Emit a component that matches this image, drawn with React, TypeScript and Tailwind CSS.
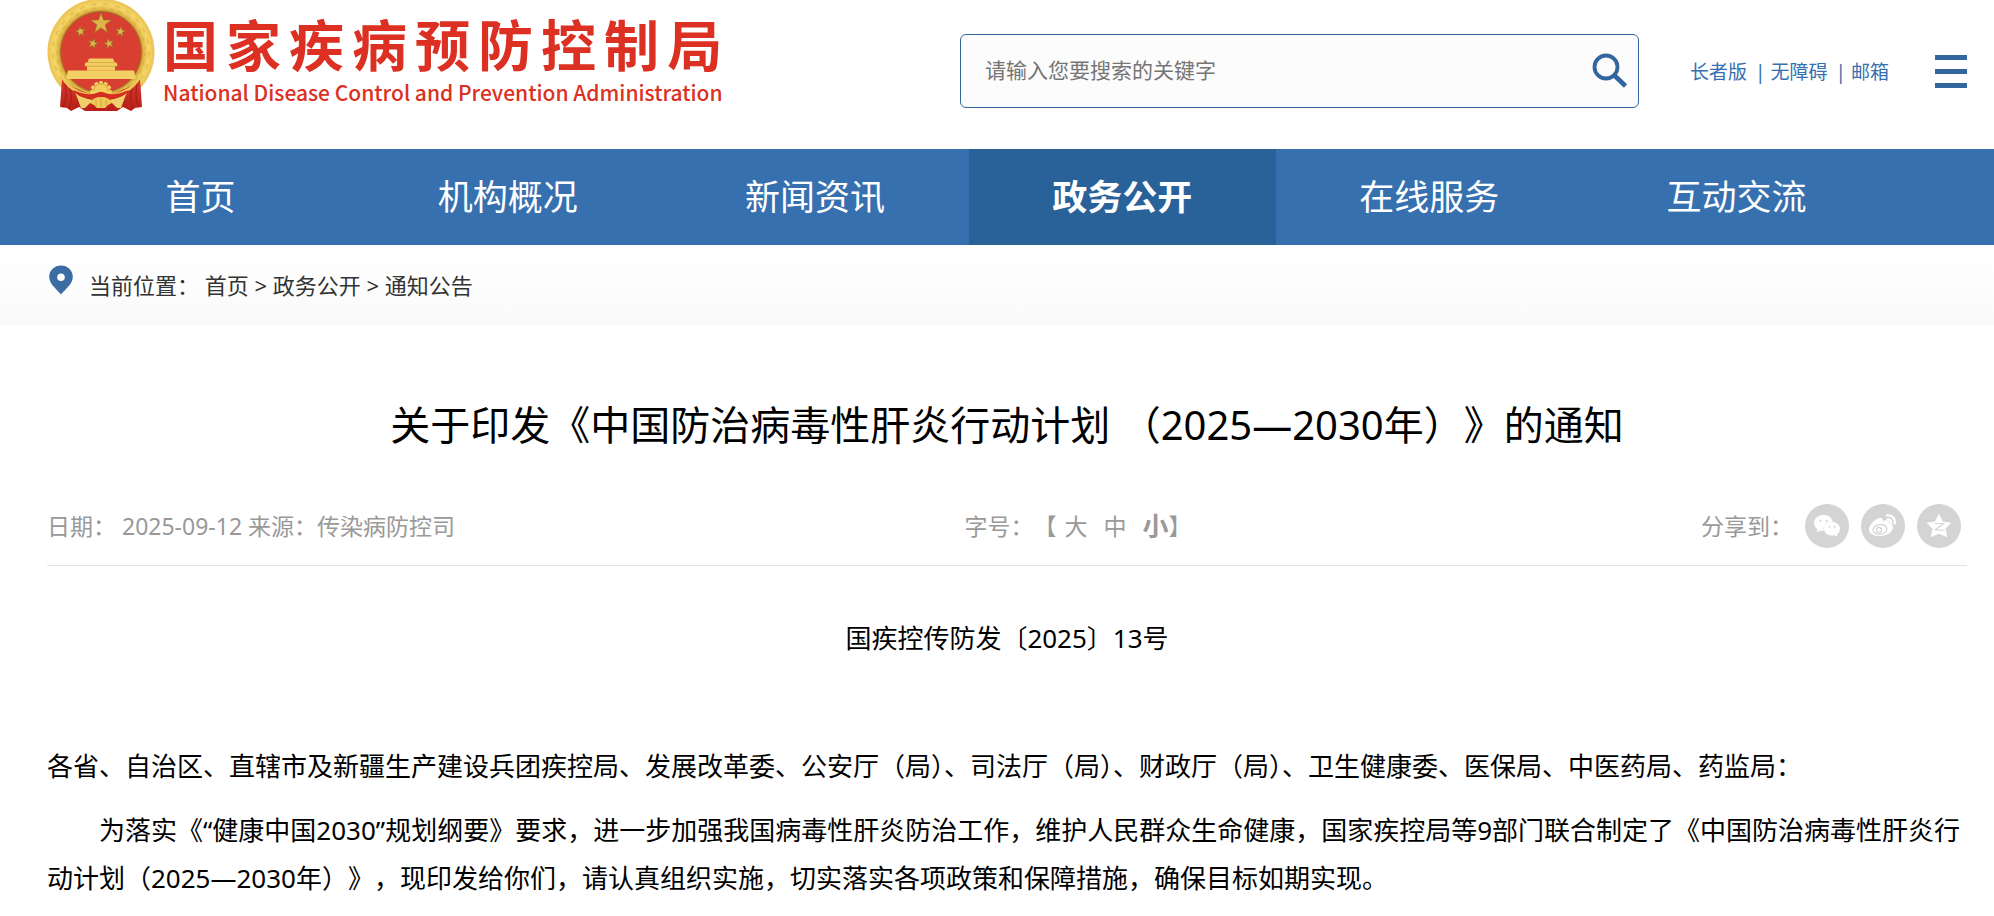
import React from "react";

const navItems = ["首页", "机构概况", "新闻资讯", "政务公开", "在线服务", "互动交流"];
const activeItem = "政务公开";
const siteName = "国家疾病预防控制局";

function starPoints(cx: number, cy: number, r: number, rot = 0) {
  const pts: string[] = [];
  for (let i = 0; i < 10; i++) {
    const rad = i % 2 === 0 ? r : r * 0.4;
    const a = ((i * 36 - 90 + rot) * Math.PI) / 180;
    pts.push(`${(cx + rad * Math.cos(a)).toFixed(2)},${(cy + rad * Math.sin(a)).toFixed(2)}`);
  }
  return pts.join(" ");
}

function Emblem() {
  const teeth = Array.from({ length: 12 }, (_, i) => i * 30);
  return (
    <svg viewBox="0 0 108 112" className="h-28 w-[108px] shrink-0" aria-hidden="true">
      <defs>
        <radialGradient id="gold" cx="54" cy="52" r="54" gradientUnits="userSpaceOnUse">
          <stop offset="0.74" stopColor="#b98a2c" />
          <stop offset="0.8" stopColor="#e6bd4c" />
          <stop offset="0.88" stopColor="#f5d768" />
          <stop offset="1" stopColor="#e8c050" />
        </radialGradient>
        <linearGradient id="drape" x1="0" y1="0" x2="0" y2="1">
          <stop offset="0" stopColor="#d8382c" />
          <stop offset="1" stopColor="#b81f18" />
        </linearGradient>
      </defs>
      <circle cx="54" cy="52" r="53.5" fill="url(#gold)" />
      <circle cx="54" cy="52" r="48" fill="none" stroke="#cf9f38" strokeWidth="1.5" strokeDasharray="5 7" opacity="0.45" />
      <circle cx="54" cy="52" r="44" fill="none" stroke="#c4932f" strokeWidth="1.2" strokeDasharray="4 5" opacity="0.4" />
      <circle cx="54" cy="52" r="40.5" fill="#d93f31" stroke="#9a7222" strokeWidth="0.8" />
      <g fill="#dfb44a" stroke="#8d6a22" strokeWidth="0.6">
        <polygon points={starPoints(54, 23.5, 11)} />
        <polygon points={starPoints(33.5, 31.5, 5.4, -10)} />
        <polygon points={starPoints(73.5, 31.5, 5.4, 10)} />
        <polygon points={starPoints(46, 43.5, 5.4, 15)} />
        <polygon points={starPoints(62, 43.5, 5.4, -15)} />
      </g>
      <path d="M42 58.5h24l1.500 4h-27zM38.500 62.500h31l1 3.500h-33zM40 66h28v4.500H40z" fill="#f3cf62" />
      <path d="M38 66.200h32M41 62.500h26" stroke="#c89a38" strokeWidth="0.7" />
      <path d="M21 70.500h66l2 8.500H19z" fill="#f3d063" />
      <path d="M15 79L24 86L46 96H62L84 86L93 79L95 107L88 108L84 111L76 107L70 111H38L32 107L24 111L20 108L13 107z" fill="url(#drape)" />
      <path d="M18 83Q21 98 16 107M22 86Q27 98 22 109M27 89Q34 100 29 107M90 83Q87 98 92 107M86 86Q81 98 86 109M81 89Q74 100 79 107" fill="none" stroke="#8f1712" strokeWidth="1" opacity="0.7" />
      <path d="M12 74Q25 92 48 95L45 97Q22 95 12 74M96 74Q83 92 60 95L63 97Q86 95 96 74" fill="#f0ca58" />
      <path d="M28 92Q33 98 46 100L38 108L34 108zM80 92Q75 98 62 100L70 108L74 108z" fill="#efd06a" />
      <g fill="#f3cf5e">
        <circle cx="54" cy="92" r="9" />
        {teeth.map((t) => (
          <rect key={t} x="52.2" y="81" width="3.6" height="4" rx="0.8" transform={`rotate(${t} 54 92)`} />
        ))}
      </g>
      <path d="M47 91a7 7 0 0 1 14 0" fill="none" stroke="#d1a23a" strokeWidth="1" />
      <path d="M26 90Q42 97 51 92.500Q54 91 57 92.500Q66 97 82 90Q76 99 62 98.500Q54 95.500 46 98.500Q32 99 26 90z" fill="#d42d22" />
      <path d="M43 103q2-5 11-6q9 1 11 6l-4 2l-3 3h-8l-3-3z" fill="#f0ca58" />
      <path d="M49 100v6M54 98v9M59 100v6" stroke="#c89a38" strokeWidth="0.8" />
    </svg>
  );
}

function SearchIcon() {
  return (
    <svg viewBox="0 0 36 36" className="h-9 w-9" fill="none" stroke="#33659f" aria-hidden="true">
      <circle cx="14" cy="14" r="11.500" strokeWidth="3.800" />
      <path d="M22.500 22.500L33.500 33" strokeWidth="4.600" />
    </svg>
  );
}

function PinIcon() {
  return (
    <svg viewBox="0 0 24 30" className="h-[30px] w-6 shrink-0" aria-hidden="true">
      <path d="M12 .5C5.400 .5 .2 5.400 .2 11.800C.2 19 7 23.500 12 29.500C17 23.500 23.800 19 23.800 11.800C23.800 5.400 18.600 .5 12 .5zM12 8.500a3.800 3.800 0 1 1 0 7.600a3.800 3.800 0 1 1 0-7.600z" fill="#3b6ca3" fillRule="evenodd" />
    </svg>
  );
}

function WechatIcon() {
  return (
    <svg viewBox="0 0 44 44" className="h-11 w-11" aria-hidden="true">
      <circle cx="22" cy="22" r="22" fill="#d4d4d4" />
      <path d="M18.500 11C12.800 11 9 14.700 9 19c0 2.600 1.300 4.800 3.400 6.200L11.500 28.300l3.800-1.800c1.200.3 2.200.4 3.300.4c-.8-5.200 3.400-9.400 9.200-9.400C26.800 13.600 23.200 11 18.500 11z" fill="#fff" />
      <path d="M35 24.800c0-4-3.700-7-8-7s-8 3-8 7s3.500 6.800 8 6.800c1 0 1.900-.1 2.800-.4l3 1.500l-.6-2.700C34 28.700 35 26.900 35 24.800z" fill="#fff" />
      <g fill="#d4d4d4">
        <circle cx="15.500" cy="16.800" r="1.100" />
        <circle cx="21.700" cy="16.800" r="1.100" />
        <circle cx="24.300" cy="22.800" r="1" />
        <circle cx="29.600" cy="22.800" r="1" />
      </g>
    </svg>
  );
}

function WeiboIcon() {
  return (
    <svg viewBox="0 0 44 44" className="h-11 w-11" aria-hidden="true">
      <circle cx="22" cy="22" r="22" fill="#d4d4d4" />
      <path d="M18 14c2.400-.7 4 .5 3.600 3c3.400-1.300 7-.8 6.400 2.600c3.600.9 4.800 3.200 3.400 6c-1.800 3.900-6.700 6.600-12.200 6.600C12.800 32.200 8 29.500 8 25.500C8 21 13.500 15.300 18 14z" fill="#fff" />
      <ellipse cx="19" cy="25.400" rx="7" ry="4.800" transform="rotate(-8 19 25.400)" fill="#fff" stroke="#d4d4d4" strokeWidth="1.200" />
      <circle cx="18" cy="26" r="2.600" fill="none" stroke="#d4d4d4" strokeWidth="1.100" />
      <circle cx="19.500" cy="24.800" r=".7" fill="#d4d4d4" />
      <path d="M26 11.400c5-.6 8.600 3.300 7.600 8.200M26.500 15.500c2.400-.4 4.100 1.500 3.400 3.900" fill="none" stroke="#fff" strokeWidth="2.400" strokeLinecap="round" />
    </svg>
  );
}

function QzoneIcon() {
  return (
    <svg viewBox="0 0 44 44" className="h-11 w-11" aria-hidden="true">
      <circle cx="22" cy="22" r="22" fill="#d4d4d4" />
      <path d="M22 10.500l3.800 7.500l8 1l-5.800 5.700l1.800 8L22 29.200l-7.800 3.500l1.800-8L10.200 19l8-1z" fill="#fff" stroke="#fff" strokeWidth=".8" strokeLinejoin="round" />
      <path d="M17.500 19.800q5-.6 9.300 0l-8.600 6q4.600.8 9.500.2" fill="none" stroke="#d4d4d4" strokeWidth="1.100" />
    </svg>
  );
}

export default function App() {
  return (
    <div className="min-h-screen bg-white font-['Noto_Sans','Noto_Sans_CJK_SC',sans-serif] text-black">
      <header className="flex h-[149px] items-start justify-between pr-[27px] pl-[47px]">
        <a href="#" className="flex items-start gap-2 font-['Noto_Sans_CJK_SC',sans-serif] text-[#dc3022]">
          <Emblem />
          <span className="flex flex-col pt-3">
            <span className="flex gap-2 text-[55px] leading-[60px] font-bold" aria-label={siteName}>
              {siteName.split("").map((c) => (
                <span key={c}>{c}</span>
              ))}
            </span>
            <span className="text-[21px] leading-10 font-medium">
              National Disease Control and Prevention Administration
            </span>
          </span>
        </a>
        <div className="flex items-center pt-[34px]">
          <form
            className="flex h-[74px] w-[679px] items-center rounded-md border border-[#33659f] bg-[#fcfcfc] pr-2.5 pl-6"
            onSubmit={(e) => e.preventDefault()}
          >
            <input
              type="text"
              aria-label="搜索"
              placeholder="请输入您要搜索的关键字"
              className="min-w-0 flex-1 bg-transparent text-[21px] outline-none placeholder:text-[#757575]"
            />
            <button type="submit" aria-label="搜索">
              <SearchIcon />
            </button>
          </form>
          <div className="ml-[51px] flex gap-2 pt-0.5 text-[19px] leading-7 text-[#3670af]">
            <a href="#">长者版</a>
            <span className="flex gap-[5px]">
              <span>|</span>
              <a href="#">无障碍</a>
            </span>
            <span className="flex gap-[5px]">
              <span>|</span>
              <a href="#">邮箱</a>
            </span>
          </div>
          <button type="button" aria-label="菜单" className="ml-[46px] flex w-8 flex-col gap-[9px]">
            <span className="h-[5px] bg-[#33659f]" />
            <span className="h-[5px] bg-[#33659f]" />
            <span className="h-[5px] bg-[#33659f]" />
          </button>
        </div>
      </header>

      <nav className="bg-[#3670af] pr-[27px] pl-[47px]">
        <ul className="flex text-[35px] text-white">
          {navItems.map((item) => (
            <li key={item} className="w-4/25">
              <a
                href="#"
                className={
                  item === activeItem
                    ? "block bg-[#296199] text-center leading-[96px] font-bold"
                    : "block text-center leading-[96px]"
                }
              >
                {item}
              </a>
            </li>
          ))}
        </ul>
      </nav>

      <div className="flex h-20 items-start bg-linear-to-b from-white via-[#fdfdfd] to-[#f9f9f9] pt-5 pl-[49px] text-[22px] text-[#333]">
        <PinIcon />
        <p className="pt-1 pl-4 leading-8">
          当前位置： <a href="#">首页</a> &gt; <a href="#">政务公开</a> &gt; <a href="#">通知公告</a>
        </p>
      </div>

      <main className="pr-[27px] pl-[47px]">
        <h1 className="pt-[70px] text-center text-[40px] leading-[60px] [text-spacing-trim:space-all]">
          关于印发《中国防治病毒性肝炎行动计划 （2025—2030年）》的通知
        </h1>
        <div className="mt-9 flex h-[75px] items-center justify-between border-b border-[#e4e4e4] pb-1 text-[23px] text-[#999] [text-spacing-trim:space-all]">
          <p>日期： 2025-09-12 来源：传染病防控司</p>
          <div className="flex items-center">
            <span>字号：【</span>
            <button type="button" className="px-2">大</button>
            <button type="button" className="px-2">中</button>
            <button type="button" className="pl-2 text-[26px] font-bold">小</button>
            <span>】</span>
          </div>
          <div className="flex items-center gap-3 pr-1.5">
            <span>分享到：</span>
            <a href="#" aria-label="微信"><WechatIcon /></a>
            <a href="#" aria-label="微博"><WeiboIcon /></a>
            <a href="#" aria-label="QQ空间"><QzoneIcon /></a>
          </div>
        </div>
        <article className="pt-12 text-[26px] leading-[48px]">
          <p className="text-center">国疾控传防发〔2025〕13号</p>
          <p className="mt-20">
            各省、自治区、直辖市及新疆生产建设兵团疾控局、发展改革委、公安厅（局）、司法厅（局）、财政厅（局）、卫生健康委、医保局、中医药局、药监局：
          </p>
          <p className="mt-4 indent-[2em] [text-spacing-trim:space-all]">
            为落实《“健康中国2030”规划纲要》要求，进一步加强我国病毒性肝炎防治工作，维护人民群众生命健康，国家疾控局等9部门联合制定了《中国防治病毒性肝炎行动计划（2025—2030年）》，现印发给你们，请认真组织实施，切实落实各项政策和保障措施，确保目标如期实现。
          </p>
        </article>
      </main>
    </div>
  );
}
